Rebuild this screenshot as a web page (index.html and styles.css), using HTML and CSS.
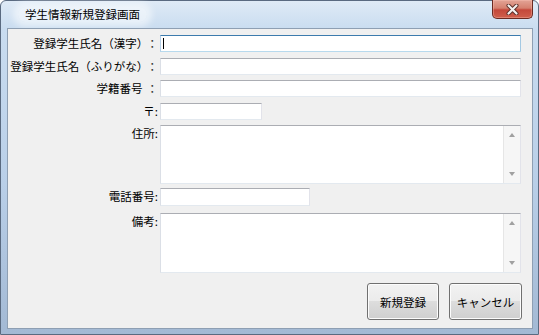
FILE: index.html
```html
<!DOCTYPE html>
<html lang="ja">

<head>
  <meta charset="UTF-8">
  <meta name="viewport" content="width=device-width, initial-scale=1.0">
  <title>学生情報新規登録画面</title>
  <link rel="stylesheet" href="styles.css">
</head>

<body>
  <div class="window">
    <div class="titlebar">
      <span class="title">学生情報新規登録画面</span>
      <button class="close" type="button" aria-label="閉じる">
        <svg width="13" height="11" viewBox="0 0 13 11">
          <path d="M2.5 1.5 L10.5 9.5 M10.5 1.5 L2.5 9.5" stroke="#5a2e28" stroke-width="4" stroke-linecap="round" />
          <path d="M2.5 1.5 L10.5 9.5 M10.5 1.5 L2.5 9.5" stroke="#f4f0ef" stroke-width="2.2" stroke-linecap="round" />
        </svg>
      </button>
    </div>

    <div class="client">
      <form class="form">
        <label class="label" for="kanji">登録学生氏名（漢字）<span class="sep">：</span></label>
        <div class="field focus">
          <input class="text" type="text" id="kanji">
          <span class="caret"></span>
        </div>

        <label class="label" for="kana">登録学生氏名（ふりがな）<span class="sep">：</span></label>
        <div class="field"><input class="text" type="text" id="kana"></div>

        <label class="label" for="number">学籍番号<span class="sep">：</span></label>
        <div class="field"><input class="text" type="text" id="number"></div>

        <label class="label" for="zip">〒:</label>
        <div class="field"><input class="text zip" type="text" id="zip"></div>

        <label class="label" for="address">住所:</label>
        <div class="memo short">
          <textarea id="address"></textarea>
          <div class="vscroll"><span class="arrow up"></span><span class="arrow down"></span></div>
        </div>

        <label class="label" for="tel">電話番号:</label>
        <div class="field"><input class="text tel" type="text" id="tel"></div>

        <label class="label" for="note">備考:</label>
        <div class="memo tall">
          <textarea id="note"></textarea>
          <div class="vscroll"><span class="arrow up"></span><span class="arrow down"></span></div>
        </div>
      </form>

      <div class="actions">
        <button class="btn" type="button">新規登録</button>
        <button class="btn cancel" type="button">キャンセル</button>
      </div>
    </div>
  </div>
</body>

</html>
```

FILE: styles.css
```css
* {
  box-sizing: border-box;
}

body {
  margin: 0;
  font-family: "Noto Sans CJK JP", "Noto Sans", sans-serif;
  font-size: 11.5px;
  color: #000;
}

.window {
  width: 539px;
  height: 335px;
  display: flex;
  flex-direction: column;
  padding: 0 5px 5px 6px;
  border: 1px solid #5a6a80;
  border-radius: 6px 6px 0 0;
  background: linear-gradient(#dfeaf6, #c9dcf0 28px, #b9cfe8 55%, #a3b9d4);
}

.titlebar {
  height: 27px;
  display: flex;
  align-items: center;
}

.title {
  margin-left: 11px;
  padding: 0 7px;
  line-height: 15px;
  color: #000;
  background: rgba(255, 255, 255, 0.5);
  border-radius: 8px;
  box-shadow: 0 0 6px 5px rgba(255, 255, 255, 0.5);
}

.close {
  margin-left: auto;
  align-self: flex-start;
  margin-top: -1px;
  width: 41px;
  height: 19px;
  padding: 0;
  display: flex;
  align-items: center;
  justify-content: center;
  border: 1px solid #6b2a21;
  border-top: none;
  border-radius: 0 0 5px 5px;
  background: linear-gradient(#e3a496 0%, #d5806f 45%, #c4483a 55%, #cf5f4c 100%);
  box-shadow: inset 0 0 0 1px rgba(255, 200, 190, 0.35);
}

.client {
  flex: 1;
  padding: 6px 10px 0 0;
  border: 1px solid #8e9fb3;
  background: #f0f0f0;
}

.form {
  display: grid;
  grid-template-columns: 150px 361px;
  grid-template-rows: 18px 17px 18px 17px 58px 20px 60px;
  column-gap: 2px;
  row-gap: 5px;
}

.label {
  align-self: start;
  text-align: right;
  white-space: nowrap;
  line-height: 17px;
}

.sep {
  margin-left: 4px;
  color: #333;
}

.field {
  position: relative;
  align-self: start;
}

.text {
  display: block;
  width: 100%;
  height: 17px;
  padding: 0 2px;
  font: inherit;
  background: #fff;
  border: 1px solid;
  border-color: #abadb3 #e2e3ea #e3e9ef #dbdfe6;
  outline: none;
}

.text.zip {
  width: 102px;
}

.text.tel {
  width: 150px;
  height: 18px;
}

.field.focus .text {
  border-color: #3d7bad #a4c9e3 #b7d9ed #b5cfe7;
}

.caret {
  position: absolute;
  left: 3px;
  top: 3px;
  width: 1px;
  height: 11px;
  background: #000;
}

.memo {
  display: flex;
  height: 58px;
  background: #fff;
  border: 1px solid;
  border-color: #abadb3 #e2e3ea #e3e9ef #dbdfe6;
}

.memo.short {
  height: 59px;
}

.memo.tall {
  height: 60px;
}

.memo textarea {
  flex: 1;
  border: none;
  resize: none;
  outline: none;
  font: inherit;
  padding: 2px;
}

.vscroll {
  width: 17px;
  display: flex;
  flex-direction: column;
  justify-content: space-between;
  align-items: center;
  padding: 7px 0;
  background: #f6f6f6;
  border-left: 1px solid #e6e6e6;
}

.arrow {
  width: 0;
  height: 0;
  border-left: 3.5px solid transparent;
  border-right: 3.5px solid transparent;
}

.arrow.up {
  border-bottom: 4px solid #a0a0a0;
}

.arrow.down {
  border-top: 4px solid #a0a0a0;
}

.actions {
  display: flex;
  justify-content: flex-end;
  gap: 10px;
  margin-top: 10px;
}

.btn {
  width: 72px;
  height: 37px;
  padding: 0;
  font: inherit;
  color: #000;
  border: 1px solid #707070;
  border-radius: 3px;
  background: linear-gradient(#f2f2f2 0%, #ebebeb 50%, #dddddd 50%, #cfcfcf 100%);
  box-shadow: inset 0 0 0 1px #fcfcfc;
}

.btn.cancel {
  width: 73px;
}
```
